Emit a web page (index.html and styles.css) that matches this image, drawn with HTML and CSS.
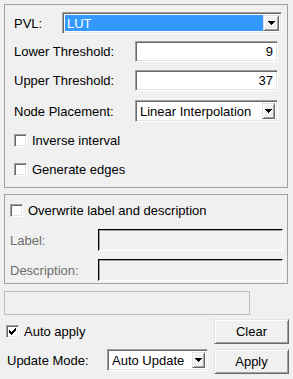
FILE: index.html
```html
<!DOCTYPE html>
<html>
<head>
<meta charset="utf-8">
<link rel="stylesheet" href="styles.css">
</head>
<body>
<div class="panel">
  <div class="frame frame-main">
    <div class="row row-pvl">
      <span class="lbl lbl-pvl">PVL:</span>
      <div class="combo combo-pvl">
        <span class="combo-text selected">LUT</span>
        <span class="drop drop-wide"><svg width="7" height="4" viewBox="0 0 7 4" shape-rendering="crispEdges"><rect x="0" y="0" width="7" height="1"/><rect x="1" y="1" width="5" height="1"/><rect x="2" y="2" width="3" height="1"/><rect x="3" y="3" width="1" height="1"/></svg></span>
      </div>
    </div>
    <div class="row row-lower">
      <span class="lbl lbl-wide">Lower Threshold:</span>
      <div class="field spin">9</div>
    </div>
    <div class="row row-upper">
      <span class="lbl lbl-wide">Upper Threshold:</span>
      <div class="field spin">37</div>
    </div>
    <div class="row row-node">
      <span class="lbl lbl-wide">Node Placement:</span>
      <div class="combo combo-node">
        <span class="combo-text">Linear Interpolation</span>
        <span class="drop"><svg width="7" height="4" viewBox="0 0 7 4" shape-rendering="crispEdges"><rect x="0" y="0" width="7" height="1"/><rect x="1" y="1" width="5" height="1"/><rect x="2" y="2" width="3" height="1"/><rect x="3" y="3" width="1" height="1"/></svg></span>
      </div>
    </div>
    <label class="check check-inverse"><span class="box"></span><span>Inverse interval</span></label>
    <label class="check check-edges"><span class="box"></span><span>Generate edges</span></label>
  </div>

  <div class="frame frame-label">
    <label class="check check-overwrite"><span class="box"></span><span>Overwrite label and description</span></label>
    <div class="row row-label">
      <span class="lbl lbl-dis">Label:</span>
      <div class="field dis"></div>
    </div>
    <div class="row row-desc">
      <span class="lbl lbl-dis">Description:</span>
      <div class="field dis"></div>
    </div>
  </div>

  <div class="status"></div>

  <div class="bottom">
    <label class="check check-auto"><span class="box checked"><svg width="7" height="7" viewBox="0 0 7 7" shape-rendering="crispEdges"><rect x="0" y="2" width="1" height="3"/><rect x="1" y="3" width="1" height="3"/><rect x="2" y="4" width="1" height="3"/><rect x="3" y="3" width="1" height="3"/><rect x="4" y="2" width="1" height="3"/><rect x="5" y="1" width="1" height="3"/><rect x="6" y="0" width="1" height="3"/></svg></span><span>Auto apply</span></label>
    <button class="btn">Clear</button>
    <div class="mode">
      <span class="lbl lbl-mode">Update Mode:</span>
      <div class="combo combo-mode">
        <span class="combo-text">Auto Update</span>
        <span class="drop"><svg width="7" height="4" viewBox="0 0 7 4" shape-rendering="crispEdges"><rect x="0" y="0" width="7" height="1"/><rect x="1" y="1" width="5" height="1"/><rect x="2" y="2" width="3" height="1"/><rect x="3" y="3" width="1" height="1"/></svg></span>
      </div>
    </div>
    <button class="btn">Apply</button>
  </div>
</div>
</body>
</html>
```
FILE: styles.css
```css
* { box-sizing: border-box; }

body {
  margin: 0;
  width: 293px;
  height: 379px;
  overflow: hidden;
  background: #f0f0f0;
  font-family: "Liberation Sans", Arial, sans-serif;
  font-size: 13px;
  color: #000;
}

.panel {
  display: flex;
  flex-direction: column;
  padding: 4px 4px 0 4px;
}

.frame {
  border: 1px solid #a0a0a0;
  margin-right: 1px;
  display: flex;
  flex-direction: column;
}

.frame-main {
  padding: 7px 5px 11px 9px;
}

.row {
  display: flex;
  align-items: center;
}

.lbl { white-space: nowrap; }
.lbl-pvl { width: 48px; }
.lbl-wide { width: 121px; }

.row-pvl { height: 22px; }
.row-lower { height: 21px; margin-top: 7px; }
.row-upper { height: 21px; margin-top: 8px; }
.row-node { height: 22px; margin-top: 9px; }

.field {
  height: 100%;
  background: #fff;
  border-style: solid;
  border-width: 1px;
  border-color: #a0a0a0 #fff #fff #a0a0a0;
  box-shadow: inset 1px 1px 0 #696969, inset -1px -1px 0 #e3e3e3;
}

.spin {
  width: 143px;
  text-align: right;
  padding-right: 4px;
  line-height: 19px;
}

.combo {
  height: 100%;
  display: flex;
  align-items: stretch;
  background: #fff;
  border-style: solid;
  border-width: 1px;
  border-color: #a0a0a0 #fff #fff #a0a0a0;
  box-shadow: inset 1px 1px 0 #696969, inset -1px -1px 0 #e3e3e3;
  padding: 2px;
}

.combo-pvl { width: 220px; }
.combo-node { width: 143px; }
.combo-mode { width: 101px; }

.combo-text {
  flex: 1;
  display: flex;
  align-items: center;
  padding-left: 2px;
  white-space: nowrap;
  overflow: hidden;
}

.selected {
  background: #3399ff;
  color: #fff;
}

.drop {
  width: 13px;
  display: flex;
  align-items: center;
  justify-content: center;
  background: #f0f0f0;
  border-style: solid;
  border-width: 1px;
  border-color: #e3e3e3 #696969 #696969 #e3e3e3;
  box-shadow: inset 1px 1px 0 #fff, inset -1px -1px 0 #a0a0a0;
}

.drop-wide { width: 16px; }

.check {
  display: flex;
  align-items: center;
  gap: 5px;
  height: 13px;
  white-space: nowrap;
}

.box {
  width: 13px;
  height: 13px;
  flex: none;
  background: #fff;
  border-style: solid;
  border-width: 1px;
  border-color: #a0a0a0 #fff #fff #a0a0a0;
  box-shadow: inset 1px 1px 0 #696969, inset -1px -1px 0 #e3e3e3;
  display: flex;
  align-items: center;
  justify-content: center;
}

.check-inverse { margin-top: 12px; }
.check-edges { margin-top: 16px; }

.frame-label {
  margin-top: 6px;
  padding: 9px 4px 2px 5px;
}

.lbl-dis {
  width: 88px;
  color: #6d6d6d;
}

.row-label { height: 22px; margin-top: 12px; }
.row-desc { height: 22px; margin-top: 8px; }

.field.dis {
  flex: 1;
  background: #f0f0f0;
  border-color: #000 #fff #fff #000;
  box-shadow: inset 1px 1px 0 #a0a0a0;
}

.status {
  margin-top: 7px;
  width: 246px;
  height: 24px;
  border: 1px solid #bcbcbc;
}

.bottom {
  margin-top: 4px;
  display: grid;
  grid-template-columns: 1fr 75px;
  grid-template-rows: 25px 25px;
  row-gap: 5px;
  align-items: center;
}

.check-auto { padding-left: 2px; }

.mode {
  display: flex;
  align-items: center;
  height: 22px;
  align-self: start;
  padding-left: 3px;
}

.lbl-mode { width: 100px; }

.btn {
  height: 25px;
  font: inherit;
  color: #000;
  background: #f0f0f0;
  border-style: solid;
  border-width: 1px;
  border-color: #e3e3e3 #696969 #696969 #e3e3e3;
  box-shadow: inset 1px 1px 0 #fff, inset -1px -1px 0 #a0a0a0;
  padding: 0;
}
```
